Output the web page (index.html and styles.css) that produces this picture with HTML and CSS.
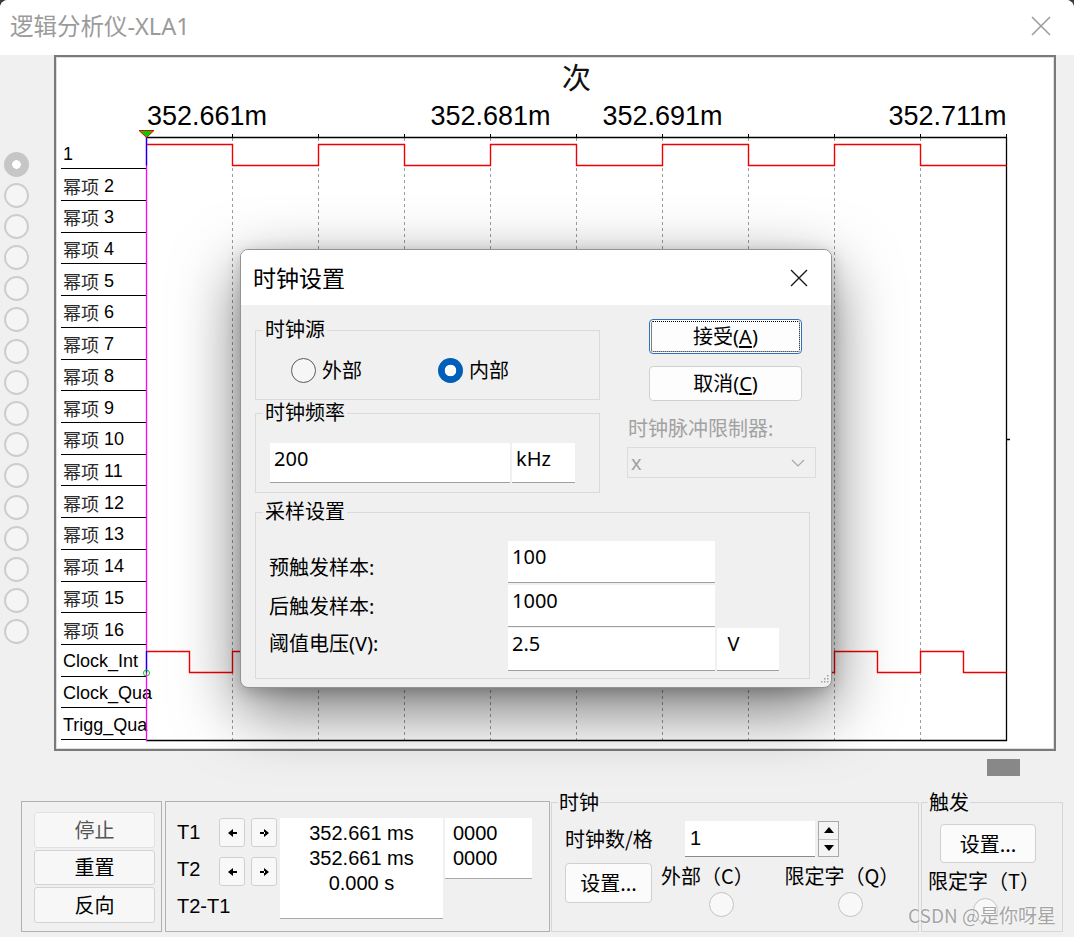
FILE: index.html
```html
<!DOCTYPE html>
<html lang="zh-CN">
<head>
<meta charset="utf-8">
<title>逻辑分析仪-XLA1</title>
<link rel="stylesheet" href="styles.css">
</head>
<body>
<div class="window">
  <header class="titlebar">
    <span class="title">逻辑分析仪-XLA1</span>
    <svg class="close" viewBox="0 0 20 20"><path d="M1 1L19 19M19 1L1 19"/></svg>
  </header>

  <div class="main">
    <div class="radio-col">
      <span class="rc sel"></span><span class="rc"></span><span class="rc"></span><span class="rc"></span>
      <span class="rc"></span><span class="rc"></span><span class="rc"></span><span class="rc"></span>
      <span class="rc"></span><span class="rc"></span><span class="rc"></span><span class="rc"></span>
      <span class="rc"></span><span class="rc"></span><span class="rc"></span><span class="rc"></span>
    </div>

    <div class="frame">
      <div class="labels">
        <div class="lrow">1</div>
        <div class="lrow"><span class="cjk">幂项</span>&nbsp;2</div>
        <div class="lrow"><span class="cjk">幂项</span>&nbsp;3</div>
        <div class="lrow"><span class="cjk">幂项</span>&nbsp;4</div>
        <div class="lrow"><span class="cjk">幂项</span>&nbsp;5</div>
        <div class="lrow"><span class="cjk">幂项</span>&nbsp;6</div>
        <div class="lrow"><span class="cjk">幂项</span>&nbsp;7</div>
        <div class="lrow"><span class="cjk">幂项</span>&nbsp;8</div>
        <div class="lrow"><span class="cjk">幂项</span>&nbsp;9</div>
        <div class="lrow"><span class="cjk">幂项</span>&nbsp;10</div>
        <div class="lrow"><span class="cjk">幂项</span>&nbsp;11</div>
        <div class="lrow"><span class="cjk">幂项</span>&nbsp;12</div>
        <div class="lrow"><span class="cjk">幂项</span>&nbsp;13</div>
        <div class="lrow"><span class="cjk">幂项</span>&nbsp;14</div>
        <div class="lrow"><span class="cjk">幂项</span>&nbsp;15</div>
        <div class="lrow"><span class="cjk">幂项</span>&nbsp;16</div>
        <div class="lrow">Clock_Int</div>
        <div class="lrow">Clock_Qua</div>
        <div class="lrow">Trigg_Qua</div>
      </div>

      <svg class="plot" width="908" height="692" viewBox="146 57 908 692">
        <text class="ci" x="576.5" y="76" text-anchor="middle" dominant-baseline="central">次</text>
        <text class="tl" x="147" y="125">352.661m</text>
        <text class="tl" x="490.5" y="125" text-anchor="middle">352.681m</text>
        <text class="tl" x="662.5" y="125" text-anchor="middle">352.691m</text>
        <text class="tl" x="1006.5" y="125" text-anchor="end">352.711m</text>

        <path class="grid" d="M232.5 138V740M318.5 138V740M404.5 138V740M490.5 138V740M576.5 138V740M662.5 138V740M748.5 138V740M834.5 138V740M920.5 138V740"/>
        <path class="tick" d="M232.5 134V138M318.5 134V138M404.5 134V138M490.5 134V138M576.5 134V138M662.5 134V138M748.5 134V138M834.5 134V138M920.5 134V138M1006.5 134V138"/>
        <path class="axis" d="M146 137.5H1007M1006.5 137V741M146 740.5H1007M1006.5 439.5H1010"/>

        <path class="wave" d="M146.5 144.5H232.5V165.5H318.5V144.5H404.5V165.5H490.5V144.5H576.5V165.5H662.5V144.5H748.5V165.5H834.5V144.5H920.5V165.5H1006.5"/>
        <path class="wave" d="M146.5 651.5H189.5V672.5H232.5V651.5H275.5V672.5H318.5V651.5H361.5V672.5H404.5V651.5H447.5V672.5H490.5V651.5H533.5V672.5H576.5V651.5H619.5V672.5H662.5V651.5H705.5V672.5H748.5V651.5H791.5V672.5H834.5V651.5H877.5V672.5H920.5V651.5H963.5V672.5H1006.5"/>

        <path class="cursor" d="M146.5 130V741"/>
        <path class="cblue" d="M146.5 137V165.5M146.5 651V672.5"/>
        <polygon class="marker" points="139,130.5 154,130.5 146.5,137.5"/>
        <circle class="gdot" cx="146.5" cy="673" r="3"/>
      </svg>
    </div>
  </div>

  <div class="hscroll"><span class="thumb"></span></div>

  <div class="panel">
    <div class="box box-ctl">
      <button class="pbtn dim">停止</button>
      <button class="pbtn">重置</button>
      <button class="pbtn">反向</button>
    </div>
    <div class="box box-t">
      <div class="tcol"><div>T1</div><div>T2</div><div>T2-T1</div></div>
      <div class="acol">
        <div class="arow">
          <button class="abtn"><svg viewBox="0 0 9 8"><path d="M0 4L5 0V8Z M4 3H9V5H4Z"/></svg></button>
          <button class="abtn"><svg viewBox="0 0 9 8"><path d="M9 4L4 0V8Z M0 3H5V5H0Z"/></svg></button>
        </div>
        <div class="arow">
          <button class="abtn"><svg viewBox="0 0 9 8"><path d="M0 4L5 0V8Z M4 3H9V5H4Z"/></svg></button>
          <button class="abtn"><svg viewBox="0 0 9 8"><path d="M9 4L4 0V8Z M0 3H5V5H0Z"/></svg></button>
        </div>
      </div>
      <div class="readout">352.661 ms<br>352.661 ms<br>0.000 s</div>
      <div class="hex">0000<br>0000</div>
    </div>

    <fieldset class="pgrp g-clock">
      <legend>时钟</legend>
      <div class="cbody">
        <div class="crow1">
          <span class="clabel">时钟数/格</span>
          <span class="cinput">1</span>
          <span class="spin">
            <span class="sp"><svg viewBox="0 0 10 6"><path d="M0 6L5 0L10 6Z"/></svg></span>
            <span class="sp"><svg viewBox="0 0 10 6"><path d="M0 0L5 6L10 0Z"/></svg></span>
          </span>
        </div>
        <div class="crow2">
          <button class="sbtn">设置...</button>
          <div class="ritem ri1"><span class="rtext">外部（C）</span><span class="prc"></span></div>
          <div class="ritem ri2"><span class="rtext">限定字（Q）</span><span class="prc"></span></div>
        </div>
      </div>
    </fieldset>

    <fieldset class="pgrp g-trig">
      <legend>触发</legend>
      <button class="sbtn tbtn">设置...</button>
      <span class="rtext ttext">限定字（T）</span>
      <span class="prc tprc"></span>
    </fieldset>
  </div>

  <div class="dialog">
    <div class="dlg-title">
      <span>时钟设置</span>
      <svg class="dlg-close" viewBox="0 0 18 18"><path d="M1 1L17 17M17 1L1 17"/></svg>
    </div>
    <div class="dlg-body">
      <div class="dlg-top">
        <div class="dlg-left">
          <fieldset class="grp g-src">
            <legend>时钟源</legend>
            <div class="radios">
              <span class="ropt"><span class="rbtn"></span>外部</span>
              <span class="ropt"><span class="rbtn on"></span>内部</span>
            </div>
          </fieldset>
          <fieldset class="grp g-freq">
            <legend>时钟频率</legend>
            <div class="inrow">
              <span class="field f-freq">200</span>
              <span class="field f-unit">kHz</span>
            </div>
          </fieldset>
        </div>
        <div class="dlg-right">
          <button class="btn btn-ok">接受(<u>A</u>)</button>
          <button class="btn btn-cancel">取消(<u>C</u>)</button>
          <div class="lim">时钟脉冲限制器:</div>
          <div class="select"><span>x</span><svg class="chev" viewBox="0 0 14 8"><path d="M1 1L7 7L13 1"/></svg></div>
        </div>
      </div>
      <fieldset class="grp g-sample">
        <legend>采样设置</legend>
        <div class="srows">
          <div class="srow"><span class="slabel o1">预触发样本:</span><span class="field f-s">100</span></div>
          <div class="srow"><span class="slabel o2">后触发样本:</span><span class="field f-s">1000</span></div>
          <div class="srow"><span class="slabel o3">阈值电压(V):</span><span class="field f-s f-s3">2.5</span><span class="field f-v">V</span></div>
        </div>
      </fieldset>
    </div>
    <svg class="grip" viewBox="0 0 12 12"><path d="M10 2h1.5v1.5H10zM7 5h1.5v1.5H7zM10 5h1.5v1.5H10zM4 8h1.5v1.5H4zM7 8h1.5v1.5H7zM10 8h1.5v1.5H10z"/></svg>
  </div>

  <div class="watermark">CSDN @是你呀星</div>
</div>
</body>
</html>
```

FILE: styles.css
```css
* { box-sizing: border-box; }
html, body { margin: 0; padding: 0; }
body {
  background: #3a3a3a;
  width: 1074px;
  height: 937px;
  overflow: hidden;
  font-family: "Noto Sans", "Noto Sans CJK SC", sans-serif;
}
.window {
  position: relative;
  width: 1074px;
  height: 937px;
  background: #f0f0f0;
  border-radius: 8px 8px 0 0;
  overflow: hidden;
  display: flex;
  flex-direction: column;
}

/* title bar */
.titlebar {
  height: 55px;
  flex: none;
  background: #fff;
  display: flex;
  align-items: center;
  justify-content: space-between;
  padding: 0 23px 3px 10px;
}
.title {
  font-size: 23.5px;
  line-height: 30px;
  color: #9b9b9b;
}
.close { width: 20px; height: 20px; fill: none; stroke: #9a9a9a; stroke-width: 1.5; }

/* main area */
.main { display: flex; height: 696px; flex: none; }
.radio-col {
  width: 54px;
  flex: none;
  display: flex;
  flex-direction: column;
  gap: 6.2px;
  padding: 96.5px 0 0 3.5px;
}
.rc {
  display: block;
  width: 25px;
  height: 25px;
  border-radius: 50%;
  border: 2px solid #cdcdcd;
  background: #f5f5f5;
}
.rc.sel {
  border: none;
  background: radial-gradient(circle, #fff 0 4px, #c6c6c6 4.6px);
}
.frame {
  width: 1002px;
  height: 696px;
  flex: none;
  border: 2px solid #7a7a7a;
  background: #fff;
  box-shadow: inset 0 0 0 1px #dedede;
  display: flex;
}
.labels { width: 90px; flex: none; padding: 81.5px 0 0 5px; }
.lrow {
  height: 31.73px;
  border-bottom: 1px solid #000;
  display: flex;
  align-items: center;
  padding-left: 2px;
  padding-top: 2px;
  font-family: "Liberation Sans", "Noto Sans CJK SC", sans-serif;
  font-size: 18px;
  line-height: 20px;
  color: #000;
  white-space: nowrap;
}
.lrow:first-child { height: 30.73px; }
.lrow .cjk { color: #2a2a2a; font-family: "Noto Sans CJK SC", sans-serif; }
.plot { width: 908px; height: 692px; flex: none; overflow: visible; display: block; }
.plot .ci { font-family: "Noto Sans CJK SC", sans-serif; font-size: 29px; fill: #111; }
.plot .tl { font-family: "Liberation Sans", sans-serif; font-size: 27px; fill: #000; }
.plot .grid { stroke: #9c9c9c; stroke-width: 1; stroke-dasharray: 3 3; fill: none; }
.plot .tick { stroke: #000; stroke-width: 1; fill: none; }
.plot .axis { stroke: #000; stroke-width: 1.3; fill: none; }
.plot .wave { stroke: #f00000; stroke-width: 1.4; fill: none; }
.plot .cursor { stroke: #ff00ff; stroke-width: 1.3; fill: none; }
.plot .cblue { stroke: #0000ff; stroke-width: 1.3; fill: none; }
.plot .marker { fill: #00d000; stroke: #f00000; stroke-width: 1; }
.plot .gdot { fill: none; stroke: #00d000; stroke-width: 1; }

/* scroll strip */
.hscroll { height: 39px; flex: none; padding: 8px 0 0 987px; }
.thumb { display: block; width: 33px; height: 17px; background: #888; }

/* bottom panel */
.panel {
  display: flex;
  align-items: flex-end;
  height: 142px;
  flex: none;
  margin-left: 21px;
  font-family: "Noto Sans CJK SC", sans-serif;
  color: #000;
}
.box { height: 131px; border: 1px solid #b1b1b1; flex: none; }
.box-ctl {
  width: 141px;
  padding: 10px 0 0 12px;
  display: flex;
  flex-direction: column;
  gap: 2px;
}
.pbtn {
  width: 121px;
  height: 35.5px;
  border: 1px solid #d3d3d3;
  border-radius: 3px;
  background: #f7f7f7;
  font: 20px/24px "Noto Sans CJK SC", sans-serif;
  color: #000;
  padding: 0;
}
.pbtn.dim { color: #555; border-color: #e1e1e1; }
.box-t {
  width: 385px;
  margin-left: 3px;
  display: flex;
  align-items: flex-start;
  padding: 16px 0 0 11px;
  font-family: "Liberation Sans", sans-serif;
  font-size: 20px;
}
.tcol { width: 42px; flex: none; margin-top: -4.5px; line-height: 37px; white-space: nowrap; }
.acol { display: flex; flex-direction: column; gap: 10px; }
.arow { display: flex; gap: 6px; }
.abtn {
  width: 26px;
  height: 29px;
  border: 1px solid #cfcfcf;
  border-radius: 3px;
  background: #f8f8f8;
  padding: 0;
  display: flex;
  align-items: center;
  justify-content: center;
}
.abtn svg { width: 9px; height: 8px; fill: #000; }
.readout {
  margin-left: 3px;
  width: 163px;
  height: 101px;
  background: #fff;
  border-bottom: 1px solid #a9a9a9;
  text-align: center;
  line-height: 25px;
  padding-top: 2.5px;
}
.hex {
  margin-left: 2px;
  width: 87px;
  height: 61px;
  background: #fff;
  border-bottom: 1px solid #a9a9a9;
  line-height: 25px;
  padding: 2.5px 0 0 8px;
}
.pgrp {
  height: 142px;
  border: 1px solid #d6d6d6;
  margin: 0;
  padding: 0;
  min-width: 0;
  flex: none;
}
.pgrp legend { font-size: 20px; line-height: 24px; padding: 0 1px; margin-left: 6px; }
.g-clock { width: 368px; margin-left: 1px; padding-top: 7px; }
.cbody { padding-left: 13px; }
.crow1 { display: flex; align-items: center; height: 36px; }
.clabel { width: 120px; font-size: 20px; line-height: 24px; }
.cinput {
  width: 130px;
  height: 36px;
  background: #fff;
  border-bottom: 1px solid #8a8a8a;
  font: 20px/34px "Liberation Sans", sans-serif;
  padding-left: 5px;
}
.spin {
  margin-left: 3px;
  width: 21px;
  height: 36px;
  border: 1px solid #a8a8a8;
  display: flex;
  flex-direction: column;
}
.sp {
  flex: 1;
  display: flex;
  align-items: center;
  justify-content: center;
  background: #f4f4f4;
}
.sp + .sp { border-top: 1px solid #c4c4c4; }
.sp svg { width: 10px; height: 6px; fill: #000; }
.crow2 { display: flex; align-items: flex-start; margin-top: 6px; }
.sbtn {
  width: 87px;
  height: 40px;
  border: 1px solid #d0d0d0;
  border-radius: 4px;
  background: #fbfbfb;
  font: 20px/24px "Noto Sans CJK SC", sans-serif;
  color: #000;
  padding: 0;
}
.ritem { display: flex; flex-direction: column; align-items: flex-start; margin-top: 3px; }
.ri1 { margin-left: 9px; width: 94px; }
.ri2 { margin-left: 29.5px; }
.rtext { font-size: 20px; line-height: 20px; white-space: nowrap; }
.prc {
  display: block;
  width: 25px;
  height: 25px;
  border-radius: 50%;
  border: 1.5px solid #c3c3c3;
  background: #f8f8f8;
  margin-top: 5.5px;
}
.ri1 .prc { margin-left: 47.5px; }
.ri2 .prc { margin-left: 53px; }
.g-trig {
  width: 142px;
  margin-left: 2px;
  padding: 10px 0 0 0;
  display: flex;
  flex-direction: column;
  align-items: flex-start;
}
.tbtn { width: 96px; height: 39px; margin-left: 18px; }
.ttext { margin: 8px 0 0 6px; display: block; }
.tprc { margin-left: 51px; margin-top: 6.5px; }

/* dialog */
.dialog {
  position: absolute;
  left: 240px;
  top: 249px;
  width: 592px;
  height: 439px;
  border: 1px solid #939393;
  border-radius: 8px;
  background: #f0f0f0;
  overflow: hidden;
  box-shadow: 0 22px 64px rgba(0, 0, 0, 0.55), 0 4px 16px rgba(0, 0, 0, 0.2);
  font-family: "Noto Sans", "Noto Sans CJK SC", sans-serif;
  color: #000;
}
.dlg-title {
  height: 55px;
  background: #fff;
  display: flex;
  align-items: center;
  justify-content: space-between;
  padding: 0 23px 0 12px;
  font-size: 23px;
  line-height: 30px;
}
.dlg-close { width: 18px; height: 18px; fill: none; stroke: #1a1a1a; stroke-width: 1.4; }
.dlg-body { padding: 0 0 0 14px; }
.dlg-top { display: flex; align-items: flex-start; }
.dlg-left { width: 345px; flex: none; }
.grp { margin: 0; border: 1px solid #dadada; padding: 0; min-width: 0; }
.grp legend { font-size: 20px; line-height: 24px; padding: 0 2px; margin-left: 7px; }
.g-src { margin-top: 13px; height: 82px; padding-top: 16px; }
.radios { display: flex; align-items: center; height: 25px; padding-left: 35px; }
.ropt { display: flex; align-items: center; gap: 6px; font-size: 20px; line-height: 25px; }
.ropt + .ropt { margin-left: 76px; }
.rbtn {
  display: block;
  width: 25px;
  height: 25px;
  border-radius: 50%;
  border: 1.5px solid #5a5a5a;
  background: #f6f6f6;
}
.rbtn.on { border: none; background: radial-gradient(circle, #fff 0 5.5px, #005fb8 6.1px); }
.g-freq { margin-top: 1px; height: 92px; padding-top: 18px; }
.inrow { display: flex; gap: 2px; padding-left: 14px; }
.field {
  display: block;
  background: #fff;
  border-bottom: 1px solid #a0a0a0;
  font-size: 20px;
  line-height: 26px;
  padding: 3px 0 0 4px;
  height: 40px;
}
.f-freq { width: 240px; }
.f-unit { width: 63px; }
.dlg-right {
  margin-left: 27px;
  width: 189px;
  padding-top: 14px;
  display: flex;
  flex-direction: column;
  align-items: flex-start;
}
.btn {
  margin-left: 22px;
  width: 153px;
  height: 35px;
  border-radius: 4px;
  background: #fdfdfd;
  border: 1px solid #d0d0d0;
  font: 20px/24px "Noto Sans", "Noto Sans CJK SC", sans-serif;
  color: #000;
  padding: 0;
}
.btn u { text-underline-offset: 2px; }
.btn-ok { border-color: #2f6fbf; outline: 1px dotted #000; outline-offset: -3px; }
.btn-cancel { margin-top: 12px; }
.lim { margin-top: 18px; font-size: 20px; line-height: 20px; color: #a2a2a2; padding-left: 1px; white-space: nowrap; }
.select {
  margin-top: 8px;
  width: 189px;
  height: 31px;
  border: 1px solid #dcdcdc;
  background: #f0f0f0;
  display: flex;
  align-items: center;
  justify-content: space-between;
  padding: 0 10px 0 3px;
  font-size: 20px;
  line-height: 24px;
  color: #a0a0a0;
}
.chev { width: 14px; height: 8px; fill: none; stroke: #a8a8a8; stroke-width: 1.2; }
.g-sample { margin-top: 7px; width: 555px; height: 179px; padding-top: 17px; }
.srows { padding-left: 13px; }
.srow { display: flex; align-items: flex-start; height: 42px; }
.srow + .srow { margin-top: 1.5px; }
.slabel { width: 239px; font-size: 20px; line-height: 24px; white-space: nowrap; }
.o1 { padding-top: 15px; }
.o2 { padding-top: 10px; }
.o3 { padding-top: 4px; }
.f-s { width: 206.5px; height: 42px; }
.f-s3 { height: 43px; }
.f-v { width: 62.5px; height: 43px; margin-left: 2px; padding-left: 11px; }
.grip { position: absolute; right: 2px; bottom: 2px; width: 12px; height: 12px; fill: #a0a0a0; }

/* watermark */
.watermark {
  position: absolute;
  left: 908px;
  top: 903px;
  font: 19px/24px "Noto Sans CJK SC", sans-serif;
  color: rgba(150, 150, 150, 0.85);
  text-shadow: 0 0 2px #fff;
  white-space: nowrap;
}
```
